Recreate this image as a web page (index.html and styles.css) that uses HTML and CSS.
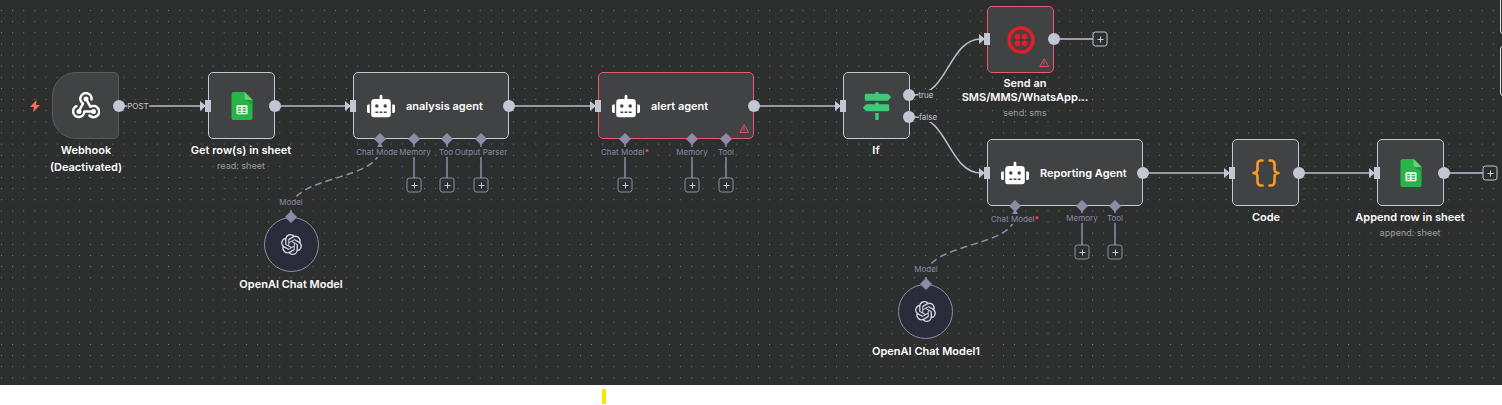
FILE: index.html
```
<!DOCTYPE html>
<html lang="en">
<head>
<meta charset="utf-8">
<title>Workflow canvas</title>
<link rel="stylesheet" href="styles.css">
</head>
<body>
<svg class="defs" aria-hidden="true">
  <defs>
    <symbol id="robot" viewBox="0 0 640 512"><path fill="#fff" d="M32,224H64V416H32A31.96,31.96,0,0,1,0,384V256A31.96,31.96,0,0,1,32,224Zm512-48V448a64.06,64.06,0,0,1-64,64H160a64.06,64.06,0,0,1-64-64V176a79.97,79.97,0,0,1,80-80H288V32a32,32,0,0,1,64,0V96H464A79.97,79.97,0,0,1,544,176ZM264,256a40,40,0,1,0-40,40A40,40,0,0,0,264,256Zm-8,128H192v32h64Zm96,0H288v32h64ZM456,256a40,40,0,1,0-40,40A40,40,0,0,0,456,256Zm-8,128H384v32h64ZM640,256V384a31.96,31.96,0,0,1-32,32H576V224h32A31.96,31.96,0,0,1,640,256Z"/></symbol>
    <symbol id="sheet" viewBox="0 0 63 84"><path fill="#28b446" d="M6 0h34l23 23v56a5 5 0 0 1-5 5H5a5 5 0 0 1-5-5V6a6 6 0 0 1 6-6z"/><path fill="#219b3d" d="M40 23h23v16z"/><path fill="#6ace7c" d="M39 0l24 24H45a6 6 0 0 1-6-6z"/><path fill="#fff" fill-rule="evenodd" d="M18 40h27a3 3 0 0 1 3 3v21a3 3 0 0 1-3 3H18a3 3 0 0 1-3-3V43a3 3 0 0 1 3-3zM19 45v4h10v-4zm14 0v4h11v-4zM19 52v4h10v-4zm14 0v4h11v-4zM19 59v4h10v-4zm14 0v4h11v-4z"/></symbol>
    <symbol id="signs" viewBox="0 0 512 512"><path fill="#3bcb76" d="M507.31 84.69L464 41.37c-6-6-14.14-9.37-22.63-9.37H288V16c0-8.84-7.16-16-16-16h-32c-8.84 0-16 7.16-16 16v16H56c-13.25 0-24 10.75-24 24v80c0 13.25 10.75 24 24 24h385.37c8.49 0 16.62-3.37 22.63-9.37l43.31-43.31c6.25-6.26 6.25-16.38 0-22.63zM224 496c0 8.84 7.16 16 16 16h32c8.84 0 16-7.16 16-16V384h-64v112zm232-272H288v-32h-64v32H70.63c-8.49 0-16.62 3.37-22.63 9.37L4.69 276.69c-6.25 6.25-6.25 16.38 0 22.63L48 342.63c6 6 14.14 9.37 22.63 9.37H456c13.25 0 24-10.75 24-24v-80c0-13.25-10.75-24-24-24z"/></symbol>
    <symbol id="openai" viewBox="0 0 24 24"><path fill="#d3d5de" d="M22.2819 9.8211a5.9847 5.9847 0 0 0-.5157-4.9108 6.0462 6.0462 0 0 0-6.5098-2.9A6.0651 6.0651 0 0 0 4.9807 4.1818a5.9847 5.9847 0 0 0-3.9977 2.9 6.0462 6.0462 0 0 0 .7427 7.0966 5.98 5.98 0 0 0 .511 4.9107 6.051 6.051 0 0 0 6.5146 2.9001A5.9847 5.9847 0 0 0 13.2599 24a6.0557 6.0557 0 0 0 5.7718-4.2058 5.9894 5.9894 0 0 0 3.9977-2.9001 6.0557 6.0557 0 0 0-.7475-7.073zm-9.022 12.6081a4.4755 4.4755 0 0 1-2.8764-1.0408l.1419-.0804 4.7783-2.7582a.7948.7948 0 0 0 .3927-.6813v-6.7369l2.02 1.1686a.071.071 0 0 1 .038.052v5.5826a4.504 4.504 0 0 1-4.4945 4.4944zm-9.6607-4.1254a4.4708 4.4708 0 0 1-.5346-3.0137l.142.0852 4.783 2.7582a.7712.7712 0 0 0 .7806 0l5.8428-3.3685v2.3324a.0804.0804 0 0 1-.0332.0615L9.74 19.9502a4.4992 4.4992 0 0 1-6.1408-1.6464zM2.3408 7.8956a4.485 4.485 0 0 1 2.3655-1.9728V11.6a.7664.7664 0 0 0 .3879.6765l5.8144 3.3543-2.0201 1.1685a.0757.0757 0 0 1-.071 0l-4.8303-2.7865A4.504 4.504 0 0 1 2.3408 7.872zm16.5963 3.8558L13.1038 8.364 15.1192 7.2a.0757.0757 0 0 1 .071 0l4.8303 2.7913a4.4944 4.4944 0 0 1-.6765 8.1042v-5.6772a.79.79 0 0 0-.407-.667zm2.0107-3.0231l-.142-.0852-4.7735-2.7818a.7759.7759 0 0 0-.7854 0L9.409 9.2297V6.8974a.0662.0662 0 0 1 .0284-.0615l4.8303-2.7866a4.4992 4.4992 0 0 1 6.6802 4.66zM8.3065 12.863l-2.02-1.1638a.0804.0804 0 0 1-.038-.0567V6.0742a4.4992 4.4992 0 0 1 7.3757-3.4537l-.142.0805L8.704 5.459a.7948.7948 0 0 0-.3927.6813zm1.0976-2.3654l2.602-1.4998 2.6069 1.4998v2.9994l-2.5974 1.4997-2.6067-1.4997Z"/></symbol>
    <symbol id="warn" viewBox="0 0 24 24"><path fill="none" stroke="#d9525f" stroke-width="2.4" stroke-linejoin="round" stroke-linecap="round" d="M12 2.5L1.8 20.500h20.400zM12 9v5M12 17v.3"/></symbol>
    <symbol id="webhook" viewBox="0 0 28 28"><g fill="none" stroke="#fff" stroke-width="2.500" stroke-linecap="round" stroke-linejoin="round"><path d="M19.500 7.500A5.600 5.600 0 1 0 11 11.500L7 19"/><path d="M14 7l4.500 7.800A5.600 5.600 0 1 1 17.500 23.500"/><path d="M4.500 14.200A5.600 5.600 0 1 0 12.300 19.500H21"/></g><g fill="#fff"><circle cx="14" cy="7" r="2.500"/><circle cx="7" cy="19.500" r="2.500"/><circle cx="21.500" cy="19.500" r="2.500"/></g></symbol>
    <symbol id="twilio" viewBox="0 0 28 28"><circle cx="14" cy="14" r="12" fill="none" stroke="#e31e26" stroke-width="3.400"/><g fill="#e31e26"><circle cx="10.500" cy="10.500" r="2.900"/><circle cx="17.500" cy="10.500" r="2.900"/><circle cx="10.500" cy="17.500" r="2.900"/><circle cx="17.500" cy="17.500" r="2.900"/></g></symbol>
    <symbol id="braces" viewBox="0 0 28 28"><path fill="none" stroke="#ff9922" stroke-width="2.600" stroke-linecap="round" stroke-linejoin="round" d="M10.500 1.500H9a3.500 3.500 0 0 0-3.500 3.500v5c0 2.500-1.500 4-4 4 2.500 0 4 1.500 4 4v5A3.500 3.500 0 0 0 9 26.500h1.500M17.500 1.500H19a3.500 3.500 0 0 1 3.500 3.500v5c0 2.500 1.500 4 4 4-2.500 0-4 1.500-4 4v5a3.500 3.500 0 0 1-3.500 3.500h-1.500"/></symbol>
    <symbol id="plus" viewBox="0 0 10 10"><path stroke="#c8cad2" stroke-width="1" d="M5 2v6M2 5h6"/></symbol>
    <g id="out"><circle r="6"/></g>
    <g id="in"><path d="M-3 -6h6v12h-6zM-8 -5l6 5-6 5z"/></g>
    <path id="gem" d="M0-6L6 0 0 6-6 0z"/>
    <pattern id="grid" width="20" height="20" patternUnits="userSpaceOnUse" patternTransform="translate(1 10) scale(.55665)"><rect width="1.800" height="1.800" fill="#7c7e7f"/></pattern>
  </defs>
</svg>

<main class="canvas">
  <svg class="layer" aria-hidden="true"><rect width="100%" height="100%" fill="url(#grid)"/></svg>

  <svg class="bolt" viewBox="0 0 10 12" aria-hidden="true"><path fill="#ff6f5c" d="M6.500 0L0 7h4l-1 5 7-7H6z"/></svg>

  <section class="node trigger" style="left:52px;top:72px"><svg class="icon"><use href="#webhook"/></svg></section>
  <section class="node" style="left:208px;top:72px"><svg class="icon"><use href="#sheet"/></svg></section>
  <section class="node agent" style="left:353px;top:72px"><svg class="icon"><use href="#robot"/></svg><h2 class="title">analysis agent</h2></section>
  <section class="node agent error" style="left:598px;top:72px"><svg class="icon"><use href="#robot"/></svg><h2 class="title">alert agent</h2><svg class="warn"><use href="#warn"/></svg></section>
  <section class="node" style="left:843px;top:72px"><svg class="icon"><use href="#signs"/></svg></section>
  <section class="node error" style="left:987px;top:6px"><svg class="icon"><use href="#twilio"/></svg><svg class="warn"><use href="#warn"/></svg></section>
  <section class="node agent" style="left:987px;top:139px"><svg class="icon"><use href="#robot"/></svg><h2 class="title">Reporting Agent</h2></section>
  <section class="node" style="left:1232px;top:139px"><svg class="icon"><use href="#braces"/></svg></section>
  <section class="node" style="left:1377px;top:139px"><svg class="icon"><use href="#sheet"/></svg></section>
  <section class="node model" style="left:264px;top:217px"><svg class="icon"><use href="#openai"/></svg></section>
  <section class="node model" style="left:898px;top:284px"><svg class="icon"><use href="#openai"/></svg></section>

  <svg class="layer" aria-hidden="true">
    <g fill="none" stroke="#b9bdc9" stroke-width="1.500">
      <path d="M119 106H202M275 106H347M509 106H592M754 106H837M1143 173H1226M1299 173H1371M909 95H915C948 95 949 39 981 39M909 117H915C948 117 949 173 981 173"/>
      <path stroke="#9a9cb0" stroke-width="2" d="M1054 39H1093M1444 173H1483"/>
      <path stroke="#8d8ba6" d="M414 139V178M447 139V178M481 139V178M625 139V178M692 139V178M726 139V178M1082 206V245M1115 206V245"/>
      <path stroke="#8d8ba6" stroke-dasharray="7 4" d="M291 217V208C293 176 379 180 380 149M926 284V275C928 243 1014 247 1015 216"/>
    </g>
    <g fill="#c3c7d3">
      <use href="#out" x="119" y="106"/><use href="#out" x="275" y="106"/><use href="#out" x="509" y="106"/><use href="#out" x="754" y="106"/><use href="#out" x="909" y="95"/><use href="#out" x="909" y="117"/><use href="#out" x="1054" y="39"/><use href="#out" x="1143" y="173"/><use href="#out" x="1299" y="173"/><use href="#out" x="1444" y="173"/>
      <use href="#in" x="208" y="106"/><use href="#in" x="353" y="106"/><use href="#in" x="598" y="106"/><use href="#in" x="843" y="106"/><use href="#in" x="987" y="39"/><use href="#in" x="987" y="173"/><use href="#in" x="1232" y="173"/><use href="#in" x="1377" y="173"/>
    </g>
    <g fill="#8d8ba6">
      <use href="#gem" x="380" y="139"/><use href="#gem" x="414" y="139"/><use href="#gem" x="447" y="139"/><use href="#gem" x="481" y="139"/>
      <use href="#gem" x="625" y="139"/><use href="#gem" x="692" y="139"/><use href="#gem" x="726" y="139"/>
      <use href="#gem" x="1015" y="206"/><use href="#gem" x="1082" y="206"/><use href="#gem" x="1115" y="206"/>
      <use href="#gem" x="291" y="217"/><use href="#gem" x="926" y="284"/>
      <path d="M380 142l3 5h-6zM1015 209l3 5h-6z"/>
    </g>
  </svg>

  <p class="caption roomy" style="left:86px;top:142px"><strong>Webhook<br>(Deactivated)</strong></p>
  <p class="caption roomy" style="left:241px;top:142px"><strong>Get row(s) in sheet</strong><small>read: sheet</small></p>
  <p class="caption roomy" style="left:876px;top:142px"><strong>If</strong></p>
  <p class="caption" style="left:1025px;top:76px"><strong>Send an<br>SMS/MMS/WhatsApp...</strong><small>send: sms</small></p>
  <p class="caption roomy" style="left:1266px;top:209px"><strong>Code</strong></p>
  <p class="caption roomy" style="left:1410px;top:209px"><strong>Append row in sheet</strong><small>append: sheet</small></p>
  <p class="caption roomy" style="left:291px;top:276px"><strong>OpenAI Chat Model</strong></p>
  <p class="caption roomy" style="left:926px;top:343px"><strong>OpenAI Chat Model1</strong></p>

  <span class="port edge" style="left:138px;top:106px">POST</span>
  <span class="port edge" style="left:926px;top:95px">true</span>
  <span class="port edge" style="left:928px;top:117px">false</span>

  <span class="port" style="left:377px;top:152px">Chat Mode</span>
  <span class="port" style="left:415px;top:152px">Memory</span>
  <span class="port" style="left:446px;top:152px">Too</span>
  <span class="port" style="left:481px;top:152px">Output Parser</span>
  <span class="port" style="left:625px;top:152px">Chat Model<b>*</b></span>
  <span class="port" style="left:692px;top:152px">Memory</span>
  <span class="port" style="left:726px;top:152px">Tool</span>
  <span class="port" style="left:1015px;top:219px">Chat Model<b>*</b></span>
  <span class="port" style="left:1082px;top:218px">Memory</span>
  <span class="port" style="left:1115px;top:218px">Tool</span>
  <span class="port" style="left:291px;top:202px">Model</span>
  <span class="port" style="left:926px;top:269px">Model</span>

  <button class="add" aria-label="Add memory" style="left:414px;top:185px"><svg><use href="#plus"/></svg></button>
  <button class="add" aria-label="Add tool" style="left:447px;top:185px"><svg><use href="#plus"/></svg></button>
  <button class="add" aria-label="Add parser" style="left:481px;top:185px"><svg><use href="#plus"/></svg></button>
  <button class="add" aria-label="Add chat model" style="left:625px;top:185px"><svg><use href="#plus"/></svg></button>
  <button class="add" aria-label="Add memory" style="left:692px;top:185px"><svg><use href="#plus"/></svg></button>
  <button class="add" aria-label="Add tool" style="left:726px;top:185px"><svg><use href="#plus"/></svg></button>
  <button class="add" aria-label="Add memory" style="left:1082px;top:252px"><svg><use href="#plus"/></svg></button>
  <button class="add" aria-label="Add tool" style="left:1115px;top:252px"><svg><use href="#plus"/></svg></button>
  <button class="add main" aria-label="Add node" style="left:1100px;top:39px"><svg><use href="#plus"/></svg></button>
  <button class="add main" aria-label="Add node" style="left:1490px;top:173px"><svg><use href="#plus"/></svg></button>

  <div class="panel upper"></div>
  <div class="panel lower"></div>
</main>
<footer class="below"><i class="mark"></i></footer>
</body>
</html>
```

FILE: styles.css
```
* { box-sizing: border-box; }
body { margin: 0; background: #fff; font-family: Inter, sans-serif; overflow: hidden; }
.defs { position: absolute; width: 0; height: 0; }
.canvas { position: relative; height: 385px; overflow: hidden; background: #2d2e2e; color: #fff; }
.layer { position: absolute; inset: 0; width: 100%; height: 100%; pointer-events: none; }

.node {
  position: absolute;
  display: flex;
  align-items: center;
  justify-content: center;
  width: 67px;
  height: 67px;
  background: #414244;
  border: 1px solid #c3c8d3;
  border-radius: 5px;
}
.node .icon { width: 28px; height: 28px; }
.trigger { border-color: #5a5b5d; border-radius: 24px 5px 5px 24px; }
.agent { width: 156px; justify-content: flex-start; gap: 11px; padding-left: 13px; }
.error { border-color: #e85a67; }
.model { width: 55px; height: 55px; border-radius: 50%; background: #2b2c3b; border-color: #8f909a; }
.model .icon { width: 21px; height: 21px; }
.title { margin: 0; font-size: 11px; line-height: 14px; font-weight: 600; }
.warn { position: absolute; right: 4px; bottom: 4px; width: 10px; height: 10px; }
.bolt { position: absolute; left: 30px; top: 100px; width: 10px; height: 12px; }

.caption {
  position: absolute;
  margin: 0;
  transform: translateX(-50%);
  text-align: center;
  white-space: nowrap;
}
.caption strong { display: block; font-size: 11px; line-height: 14px; font-weight: 600; }
.caption small { display: block; font-size: 9px; line-height: 17px; color: #9c9da1; }
.roomy strong { line-height: 17px; }
.roomy small { line-height: 14px; }

.port {
  position: absolute;
  transform: translate(-50%, -50%);
  font-size: 8px;
  line-height: 10px;
  white-space: nowrap;
  color: #8c8aa8;
  background: #2d2e2e;
}
.port b { color: #ff4b4b; }
.edge { color: #c3c7d3; }

.add {
  position: absolute;
  transform: translate(-50%, -50%);
  display: flex;
  align-items: center;
  justify-content: center;
  width: 15px;
  height: 15px;
  padding: 0;
  background: #2d2e2e;
  border: 1px solid #918fa9;
  border-radius: 3px;
}
.add.main { border-color: #c3c7d3; }
.add svg { width: 10px; height: 10px; flex: none; }

.panel { position: absolute; right: -30px; width: 32px; border: 1px solid #e4e6ec; border-radius: 3px; }
.upper { top: -10px; height: 44px; }
.lower { top: 46px; height: 50px; }

.below { padding: 4px 0 0 602px; }
.mark { display: block; width: 4px; height: 15px; background: #ffe600; }
```
